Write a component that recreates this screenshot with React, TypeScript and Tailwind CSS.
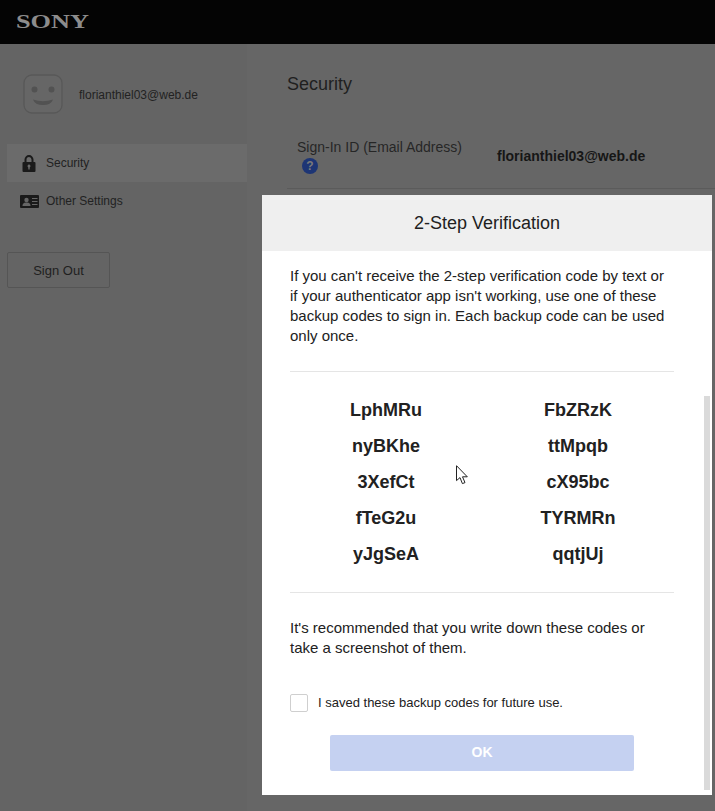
export default function App() {
  const codes = [
    ["LphMRu", "FbZRzK"],
    ["nyBKhe", "ttMpqb"],
    ["3XefCt", "cX95bc"],
    ["fTeG2u", "TYRMRn"],
    ["yJgSeA", "qqtjUj"],
  ];
  return (
    <div className="relative h-[811px] w-[715px] overflow-hidden bg-[#666666] font-['Liberation_Sans',Arial,sans-serif] text-[#1d1d1d]">
      <header className="flex h-[44px] items-center bg-[#040404] pl-[16px]">
        <span className="origin-left scale-x-[1.46] font-['Liberation_Serif',serif] text-[18px] font-bold leading-none text-[#8c8c8c]">SONY</span>
      </header>
      <div className="flex h-[767px]">
        <aside className="w-[247px] shrink-0 bg-[#646464] pl-[7px] pt-[30px]">
          <div className="flex items-center pl-[16px]">
            <svg width="40" height="40" viewBox="0 0 40 40" fill="none" className="shrink-0">
              <rect x="1" y="1" width="38" height="38" rx="8" fill="#666666" stroke="#585858" strokeWidth="1.3" />
              <circle cx="11.5" cy="15.5" r="3" fill="#525252" />
              <circle cx="28.5" cy="15.5" r="3" fill="#525252" />
              <path d="M10 25.5 Q20 29 30 25.5 Q28 31 20 31 Q12 31 10 25.5Z" fill="#525252" />
            </svg>
            <span className="ml-[16px] mt-[2px] text-[12px] leading-none text-[#222222]">florianthiel03@web.de</span>
          </div>
          <nav className="mt-[30px] text-[12px] text-[#222222]">
            <div className="flex h-[38px] items-center bg-[#6b6b6b] pl-[15px]">
              <svg width="14" height="17" viewBox="0 0 14 17" className="shrink-0">
                <path fillRule="evenodd" d="M2.5 7V4.6a4.5 4.5 0 0 1 9 0V7h1a1 1 0 0 1 1 1v8a1 1 0 0 1-1 1h-11a1 1 0 0 1-1-1V8a1 1 0 0 1 1-1zM4.5 7h5V4.6a2.5 2.5 0 0 0-5 0zM7 9.6a1.5 1.5 0 0 0-.7 2.8V14.6h1.4V12.4A1.5 1.5 0 0 0 7 9.6z" fill="#1a1a1a" />
              </svg>
              <span className="ml-[10px]">Security</span>
            </div>
            <div className="flex h-[38px] items-center pl-[13px]">
              <svg width="19" height="13" viewBox="0 0 19 13" className="shrink-0">
                <path fillRule="evenodd" d="M1 0h17a1 1 0 0 1 1 1v11a1 1 0 0 1-1 1H1a1 1 0 0 1-1-1V1a1 1 0 0 1 1-1z" fill="#1a1a1a" />
                <circle cx="6.5" cy="5" r="2.2" fill="#666666" />
                <path d="M2.5 11c0-3 1.8-3.6 4-3.6s4 .6 4 3.6z" fill="#666666" />
                <path d="M12 3.5h5.5M12 6.5h5.5M12 9.5h5.5" stroke="#666666" strokeWidth="1" />
              </svg>
              <span className="ml-[7px]">Other Settings</span>
            </div>
          </nav>
          <button className="mt-[32px] h-[36px] w-[103px] rounded-[2px] border border-[#555555] pt-[1px] text-center text-[13px] text-[#1f1f1f]">Sign Out</button>
        </aside>
        <main className="flex-1 pl-[40px] pt-[30px]">
          <h1 className="text-[18px] leading-[20px] text-[#1f1f1f]">Security</h1>
          <div className="mt-[43px] flex h-[52px] items-start border-b border-[#5b5b5b] pl-[10px]">
            <div className="w-[200px] pt-[2px] text-[14px] leading-[16px] text-[#262626]">
              <div>Sign-In ID (Email Address)</div>
              <div className="mt-[3px] ml-[5px] flex h-[16px] w-[16px] items-center justify-center rounded-full bg-[#1d3575] text-[12px] font-bold leading-none text-[#7a7a7a]">?</div>
            </div>
            <div className="pt-[11px] text-[14px] font-bold leading-[16px] text-[#161616]">florianthiel03@web.de</div>
          </div>
        </main>
      </div>

      <div className="absolute left-[262px] top-[195px] flex h-[600px] w-[450px] flex-col bg-white">
        <div className="flex h-[56px] shrink-0 items-center justify-center bg-[#efefef] text-[18px] text-[#212121]">2-Step Verification</div>
        <div className="relative flex-1 px-[28px] pt-[15px]">
          <div className="absolute bottom-[5px] right-[2px] h-[394px] w-[6px] bg-[#dadada]" />
          <p className="w-[384px] text-[15px] leading-[20px] text-[#212121]">
            If you can't receive the 2-step verification code by text or if your authenticator app isn't working, use one of these backup codes to sign in. Each backup code can be used only once.
          </p>
          <div className="mt-[25px] w-[384px] border-y border-[#e5e5e5] py-[26px]">
            <div className="grid grid-cols-2 gap-y-[12px]">
              {codes.flat().map((c) => (
                <div key={c} className="flex h-[24px] items-center justify-center text-[18px] font-bold text-[#212121]">{c}</div>
              ))}
            </div>
          </div>
          <p className="mt-[25px] w-[384px] text-[15px] leading-[20px] text-[#212121]">
            It's recommended that you write down these codes or take a screenshot of them.
          </p>
          <label className="mt-[36px] flex items-center">
            <span className="h-[18px] w-[18px] rounded-[2px] border border-[#cfcfcf] bg-white" />
            <span className="ml-[10px] text-[13px] leading-[18px] text-[#212121]">I saved these backup codes for future use.</span>
          </label>
          <button className="ml-[40px] mt-[23px] block h-[36px] w-[304px] rounded-[2px] bg-[#c5d1f1] pb-[2px] text-center text-[14px] font-bold text-white">OK</button>
        </div>
      </div>

      <svg width="14" height="20" viewBox="0 0 14 20" className="absolute left-[456px] top-[465px]">
        <path d="M.5.7V15.6L4 12.6l2.4 6 2.6-1-2.5-5.8H11.3z" fill="#fff" stroke="#222" strokeWidth="1" />
      </svg>
    </div>
  );
}
